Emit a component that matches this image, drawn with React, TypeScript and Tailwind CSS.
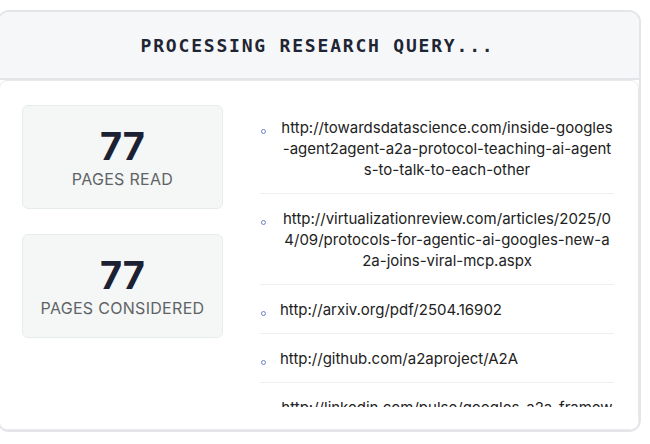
import React from 'react';

const sources = [
  'http://towardsdatascience.com/inside-googles-agent2agent-a2a-protocol-teaching-ai-agents-to-talk-to-each-other',
  'http://virtualizationreview.com/articles/2025/04/09/protocols-for-agentic-ai-googles-new-a2a-joins-viral-mcp.aspx',
  'http://arxiv.org/pdf/2504.16902',
  'http://github.com/a2aproject/A2A',
  'http://linkedin.com/pulse/googles-a2a-framework-explained',
];

function StatCard({ value, label }: { value: number; label: string }) {
  return (
    <div className="flex h-[104px] w-[201px] flex-col items-center justify-center rounded-md border border-[#e6ece9] bg-[#f4f7f5]">
      <div className="text-[38px] font-bold leading-[40px] text-[#1c2033]">{value}</div>
      <div className="mt-[3px] text-[16px] leading-5 tracking-[0.3px] text-[#5f6368]">{label}</div>
    </div>
  );
}

export default function App() {
  return (
    <div className="min-h-screen bg-white pt-[10px] font-['Inter',sans-serif]">
      <div className="-ml-[3px] w-[644px] overflow-hidden rounded-xl border-2 border-[#e4e5e8] bg-white">
        {/* Header */}
        <div className="flex h-[68px] items-center justify-center border-b-2 border-[#e4e5e8] bg-[#f6f7f9]">
          <h2 className="pr-[3px] font-['DejaVu_Sans_Mono',monospace] text-[18px] font-bold tracking-widest text-[#1f2633]">
            PROCESSING RESEARCH QUERY...
          </h2>
        </div>

        {/* Body */}
        <div className="flex h-[350px] gap-[37px] rounded-lg border border-[#e8e9ec] bg-white pb-6 pl-[22px] pr-6 pt-6">
          <div className="flex flex-col gap-[25px]">
            <StatCard value={77} label="PAGES READ" />
            <StatCard value={77} label="PAGES CONSIDERED" />
          </div>

          <div className="-mt-[2px] h-[304px] w-[354px] overflow-hidden">
            <ul>
              {sources.map((url) => (
                <li key={url} className="flex border-b border-[#eeeff1] py-[13.5px]">
                  <span className="mt-[12px] ml-[1px] mr-[14px] h-[5px] w-[5px] shrink-0 rounded-full border border-[#6b83c7]" />
                  <span className="min-w-0 break-all text-center text-[15px] leading-[21px] text-[#222]">
                    {url}
                  </span>
                </li>
              ))}
            </ul>
          </div>
        </div>
      </div>
    </div>
  );
}
